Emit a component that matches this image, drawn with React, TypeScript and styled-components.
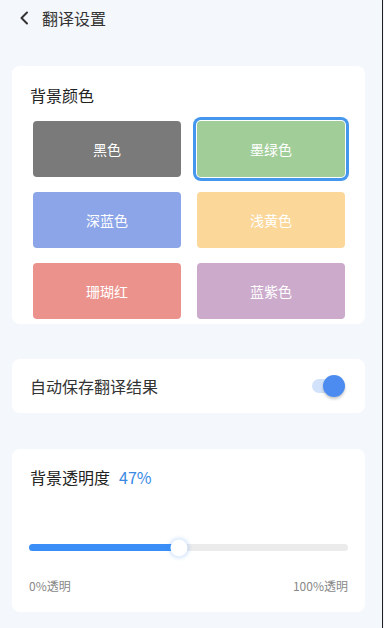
import React, { useState } from 'react'
import styled, { createGlobalStyle } from 'styled-components'

const GlobalStyle = createGlobalStyle`
  html, body {
    margin: 0;
    padding: 0;
    background: #f4f7fb;
  }
  body {
    font-family: "Noto Sans CJK SC", "Noto Sans", Roboto, sans-serif;
    color: #333;
  }
`

const Page = styled.div`
  width: 383px;
  height: 628px;
  overflow: hidden;
  box-sizing: border-box;
  border-right: 1px solid #1e1e1e;
  background: #f4f7fb;
  padding: 0 17px 0 12px;
  display: flex;
  flex-direction: column;
`

const Header = styled.div`
  height: 36px;
  display: flex;
  align-items: center;
  gap: 11px;
  padding-left: 5px;
  margin-bottom: 30px;
`

const BackButton = styled.button`
  border: none;
  background: none;
  padding: 0;
  width: 14px;
  height: 16px;
  display: flex;
  align-items: center;
  justify-content: center;
  cursor: pointer;
`

const Title = styled.span`
  font-size: 16px;
  line-height: 22px;
  color: #333;
`

const Card = styled.div<{ $height: number; $gap?: number }>`
  background: #fff;
  border-radius: 8px;
  height: ${({ $height }) => $height}px;
  margin-bottom: ${({ $gap = 0 }) => $gap}px;
  overflow: hidden;
  flex-shrink: 0;
  box-sizing: border-box;
`

const ColorCard = styled(Card)`
  padding: 18px 21px 0 18px;
`

const CardTitle = styled.div`
  font-size: 16px;
  line-height: 22px;
  color: #222;
`

const Grid = styled.div`
  display: grid;
  grid-template-columns: 148px 148px;
  column-gap: 16px;
  row-gap: 15px;
  margin-top: 15px;
  padding-left: 3px;
`

const Swatch = styled.button<{ $color: string; $active: boolean }>`
  height: 56px;
  border: none;
  border-radius: 4px;
  background: ${({ $color }) => $color};
  color: #fff;
  font-family: inherit;
  font-size: 14px;
  cursor: pointer;
  box-shadow: ${({ $active }) =>
    $active ? '0 0 0 1px #fff, 0 0 0 4px #4597ee' : 'none'};
`

const ToggleCard = styled(Card)`
  display: flex;
  align-items: center;
  justify-content: space-between;
  padding: 0 19px 0 18px;
`

const RowLabel = styled.span`
  font-size: 16px;
  line-height: 22px;
  color: #333;
`

const Switch = styled.button<{ $on: boolean }>`
  position: relative;
  width: 34px;
  height: 22px;
  padding: 0;
  border: none;
  background: none;
  cursor: pointer;

  &::before {
    content: '';
    position: absolute;
    left: 0;
    top: 4px;
    width: 30px;
    height: 14px;
    border-radius: 7px;
    background: ${({ $on }) => ($on ? '#d3e2fb' : '#ddd')};
  }

  &::after {
    content: '';
    position: absolute;
    top: 0;
    left: ${({ $on }) => ($on ? '11px' : '0')};
    width: 22px;
    height: 22px;
    border-radius: 50%;
    background: ${({ $on }) => ($on ? '#4c8cf0' : '#fafafa')};
    box-shadow: 0 2px 3px rgba(0, 0, 0, 0.22);
  }
`

const SliderCard = styled(Card)`
  padding: 17px 17px 0 17px;
  display: flex;
  flex-direction: column;
`

const SliderTitle = styled(CardTitle)`
  padding-left: 1px;
  display: flex;
  gap: 9px;
`

const Percent = styled.span`
  color: #3a8ae4;
`

const Track = styled.div`
  position: relative;
  height: 7px;
  border-radius: 4px;
  background: #ebebeb;
  margin-top: 56px;
`

const Fill = styled.div`
  position: absolute;
  left: 0;
  top: 0;
  bottom: 0;
  border-radius: 4px;
  background: #3a8ef5;
`

const Thumb = styled.div`
  position: absolute;
  top: 50%;
  width: 17px;
  height: 17px;
  border-radius: 50%;
  background: #fff;
  transform: translate(-50%, -50%);
  box-shadow: 0 0 4px 1px rgba(58, 142, 245, 0.3);
`

const Scale = styled.div`
  display: flex;
  justify-content: space-between;
  margin-top: 27px;
  font-size: 12px;
  line-height: 16px;
  color: #888;
`

const colors = [
  { name: '黑色', color: '#7a7a7a' },
  { name: '墨绿色', color: '#a1cd99' },
  { name: '深蓝色', color: '#8ca5e8' },
  { name: '浅黄色', color: '#fbd79a' },
  { name: '珊瑚红', color: '#ec928c' },
  { name: '蓝紫色', color: '#cbaacb' },
]

export default function App() {
  const [selected, setSelected] = useState(1)
  const [autoSave, setAutoSave] = useState(true)
  const opacity = 47

  return (
    <>
      <GlobalStyle />
      <Page>
        <Header>
          <BackButton aria-label="返回">
            <svg width="10" height="14" viewBox="0 0 10 14">
              <path d="M8 1.5 L2.5 7 L8 12.5" fill="none" stroke="#333" strokeWidth="2" strokeLinecap="round" strokeLinejoin="round" />
            </svg>
          </BackButton>
          <Title>翻译设置</Title>
        </Header>

        <ColorCard $height={258} $gap={35}>
          <CardTitle>背景颜色</CardTitle>
          <Grid>
            {colors.map((c, i) => (
              <Swatch key={c.name} $color={c.color} $active={i === selected} onClick={() => setSelected(i)}>
                {c.name}
              </Swatch>
            ))}
          </Grid>
        </ColorCard>

        <ToggleCard $height={54} $gap={36}>
          <RowLabel>自动保存翻译结果</RowLabel>
          <Switch $on={autoSave} onClick={() => setAutoSave(!autoSave)} aria-label="自动保存" />
        </ToggleCard>

        <SliderCard $height={163}>
          <SliderTitle>
            背景透明度<Percent>{opacity}%</Percent>
          </SliderTitle>
          <Track>
            <Fill style={{ width: `${opacity}%` }} />
            <Thumb style={{ left: `${opacity}%` }} />
          </Track>
          <Scale>
            <span>0%透明</span>
            <span>100%透明</span>
          </Scale>
        </SliderCard>
      </Page>
    </>
  )
}
